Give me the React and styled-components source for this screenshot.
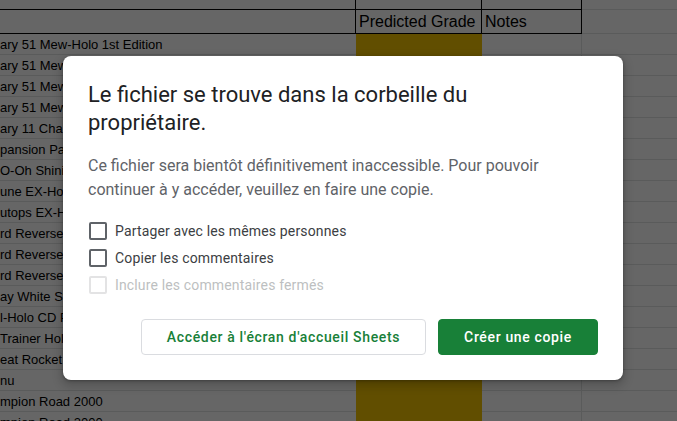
import styled, { createGlobalStyle } from "styled-components";

const GlobalStyle = createGlobalStyle`
  html, body {
    margin: 0;
    padding: 0;
  }
  body {
    background: #fff;
    font-family: Roboto, "Liberation Sans", sans-serif;
  }
`;

const Page = styled.div`
  position: relative;
  width: 677px;
  height: 421px;
  overflow: hidden;
  background: #fff;
`;

const Sheet = styled.div`
  display: flex;
  flex-direction: column;
  font-family: "Liberation Sans", Arial, sans-serif;
  color: #000;
`;

const Row = styled.div`
  display: grid;
  grid-template-columns: 356px 126px 100px 1fr;
  height: ${(p) => p.$h}px;
`;

const Cell = styled.div`
  box-sizing: border-box;
  display: flex;
  align-items: flex-end;
  padding: 0 3px 3px;
  white-space: nowrap;
  font-size: ${(p) => (p.$big ? "16px" : "13px")};
  line-height: 1;
  background: ${(p) => p.$fill || "transparent"};
  border-top: ${(p) => (p.$top ? `1px solid ${p.$top}` : "0")};
  border-bottom: ${(p) => (p.$bottom ? `1px solid ${p.$bottom}` : "0")};
  border-right: ${(p) => (p.$right ? `1px solid ${p.$right}` : "0")};
  position: relative;
  z-index: ${(p) => (p.$over ? 1 : 0)};
`;

const CellText = styled.span`
  margin-left: -3px;
`;

const Backdrop = styled.div`
  position: absolute;
  inset: 0;
  box-sizing: border-box;
  padding: 15px 0 0 9px;
  background: rgba(0, 0, 0, 0.6);
  display: flex;
  align-items: center;
  justify-content: center;
  z-index: 5;
`;

const Dialog = styled.div`
  width: 560px;
  box-sizing: border-box;
  padding: 25px 25px 25px;
  background: #fff;
  border-radius: 8px;
  box-shadow: 0 4px 8px 3px rgba(0, 0, 0, 0.15), 0 1px 3px rgba(0, 0, 0, 0.3);
  font-family: Roboto, "Liberation Sans", sans-serif;
`;

const Title = styled.h2`
  margin: 0 0 17px;
  max-width: 460px;
  font-size: 22px;
  line-height: 28px;
  font-weight: 400;
  color: #202124;
`;

const Text = styled.p`
  margin: 0;
  font-size: 16px;
  line-height: 24px;
  color: #5f6368;
`;

const Options = styled.div`
  display: flex;
  flex-direction: column;
  margin-top: 15px;
`;

const Option = styled.label`
  display: flex;
  align-items: center;
  gap: 8px;
  height: 27px;
  font-size: 14px;
  letter-spacing: 0.15px;
  color: ${(p) => (p.$disabled ? "#bdbfc1" : "#3c4043")};
`;

const Box = styled.span`
  width: 18px;
  height: 18px;
  box-sizing: border-box;
  margin-left: 1px;
  border: 2px solid ${(p) => (p.$disabled ? "#e3e3e4" : "#5f6368")};
  border-radius: 2px;
`;

const Actions = styled.div`
  display: flex;
  justify-content: flex-end;
  gap: 12px;
  margin-top: 21px;
`;

const Button = styled.button`
  height: 36px;
  padding: 0 25px;
  border-radius: 4px;
  font-family: Roboto, "Liberation Sans", sans-serif;
  font-size: 14px;
  font-weight: 500;
  letter-spacing: 0.65px;
  cursor: pointer;
  border: 1px solid ${(p) => (p.$primary ? "#188038" : "#dadce0")};
  background: ${(p) => (p.$primary ? "#188038" : "#fff")};
  color: ${(p) => (p.$primary ? "#fff" : "#188038")};
`;

// only the part of column A that shows left of the dialog
const rows = [
  "ary 51 Mew-Holo 1st Edition",
  "ary 51 Mew-Ho",
  "ary 51 Mew-Ho",
  "ary 51 Mew-Ho",
  "ary 11 Chariz",
  "pansion Pack",
  "O-Oh Shining",
  "une EX-Holo",
  "utops EX-Holo",
  "rd Reverse H",
  "rd Reverse H",
  "rd Reverse H",
  "ay White Star",
  "l-Holo CD Pro",
  " Trainer Holo",
  "eat Rocket R",
  "nu",
  "mpion Road 2000",
  "mpion Road 2000",
];

const BLACK = "#000";
const GRID = "#e2e3e3";
const YELLOW = "#f2c200";

const App = () => {
  return (
    <Page>
      <GlobalStyle />
      <Sheet>
        <Row $h={9}>
          <Cell $right={BLACK} />
          <Cell $right={BLACK} />
          <Cell $right={BLACK} />
          <Cell />
        </Row>
        <Row $h={25}>
          <Cell $top={BLACK} $bottom={BLACK} $right={BLACK} />
          <Cell $big $top={BLACK} $bottom={BLACK} $right={BLACK}>
            Predicted Grade
          </Cell>
          <Cell $big $top={BLACK} $bottom={BLACK} $right={BLACK}>
            Notes
          </Cell>
          <Cell $top={GRID} $bottom={GRID} />
        </Row>
        {rows.map((name, i) => (
          <Row key={i} $h={21}>
            <Cell $bottom={GRID} $over>
              <CellText>{name}</CellText>
            </Cell>
            <Cell $fill={YELLOW} />
            <Cell $bottom={GRID} $right={GRID} />
            <Cell $bottom={GRID} />
          </Row>
        ))}
      </Sheet>

      <Backdrop>
        <Dialog role="dialog">
          <Title>Le fichier se trouve dans la corbeille du propriétaire.</Title>
          <Text>
            Ce fichier sera bientôt définitivement inaccessible. Pour pouvoir
            continuer à y accéder, veuillez en faire une copie.
          </Text>
          <Options>
            <Option>
              <Box />
              Partager avec les mêmes personnes
            </Option>
            <Option>
              <Box />
              Copier les commentaires
            </Option>
            <Option $disabled>
              <Box $disabled />
              Inclure les commentaires fermés
            </Option>
          </Options>
          <Actions>
            <Button>Accéder à l'écran d'accueil Sheets</Button>
            <Button $primary>Créer une copie</Button>
          </Actions>
        </Dialog>
      </Backdrop>
    </Page>
  );
};

export default App;
